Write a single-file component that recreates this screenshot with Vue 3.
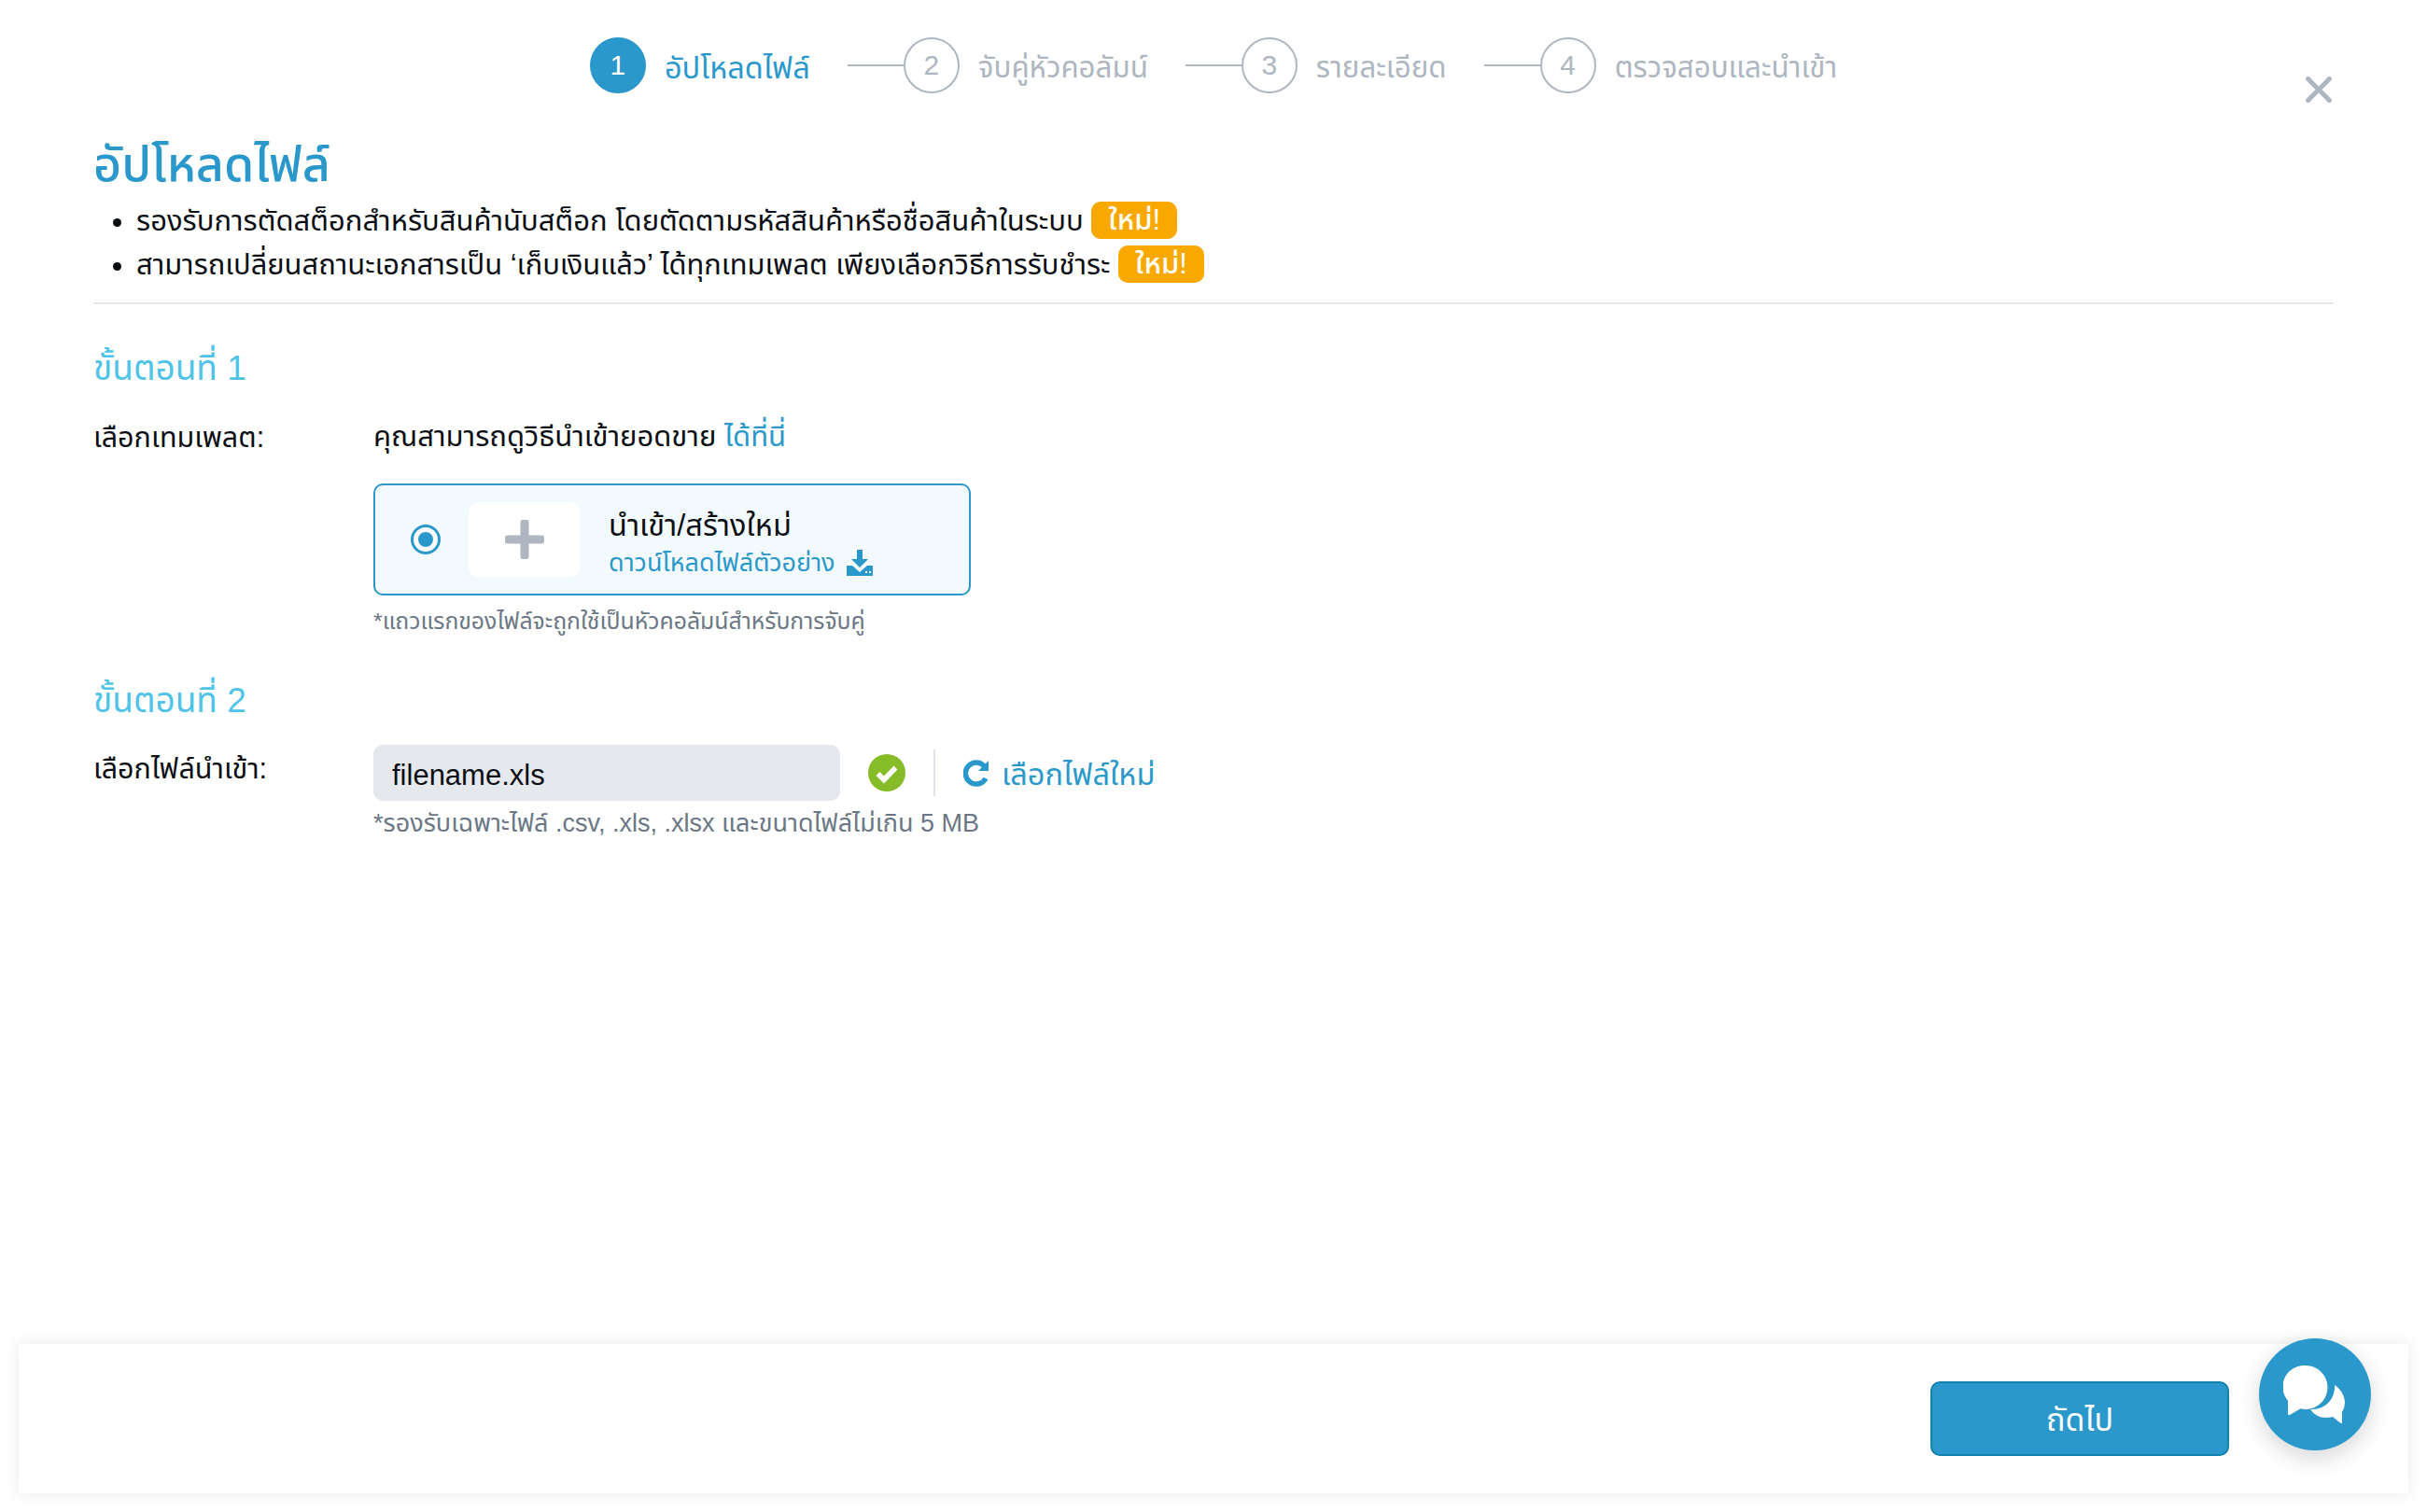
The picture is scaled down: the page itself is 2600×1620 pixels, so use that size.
<script setup>
const steps = [
  { n: 1, label: 'อัปโหลดไฟล์', active: true },
  { n: 2, label: 'จับคู่หัวคอลัมน์' },
  { n: 3, label: 'รายละเอียด' },
  { n: 4, label: 'ตรวจสอบและนำเข้า' }
]
</script>

<template>
  <div class="page">
    <nav class="stepper">
      <div v-for="s in steps" :key="s.n" class="step" :class="{ active: s.active }">
        <span v-if="s.n > 1" class="line"></span>
        <span class="num">{{ s.n }}</span>
        <span class="step-label">{{ s.label }}</span>
      </div>
    </nav>
    <svg class="close" width="28" height="28" viewBox="0 0 28 28"><path d="M2.500 2.500l23 23M25.500 2.500l-23 23" stroke="#aeb6c1" stroke-width="5" stroke-linecap="round" fill="none"/></svg>

    <main class="content">
      <h1>อัปโหลดไฟล์</h1>
      <ul class="notes">
        <li>รองรับการตัดสต็อกสำหรับสินค้านับสต็อก โดยตัดตามรหัสสินค้าหรือชื่อสินค้าในระบบ <span class="badge">ใหม่!</span></li>
        <li class="narrow">สามารถเปลี่ยนสถานะเอกสารเป็น ‘เก็บเงินแล้ว’ ได้ทุกเทมเพลต เพียงเลือกวิธีการรับชำระ <span class="badge">ใหม่!</span></li>
      </ul>

      <h2 class="first">ขั้นตอนที่ 1</h2>
      <div class="row">
        <div class="label">เลือกเทมเพลต:</div>
        <div class="field">
          <div class="intro">คุณสามารถดูวิธีนำเข้ายอดขาย <a>ได้ที่นี่</a></div>
          <div class="card">
            <span class="radio"><span></span></span>
            <span class="plus-box">
              <svg width="42" height="42" viewBox="0 0 42 42"><path d="M21 3v36M3 21h36" stroke="#aeb6c1" stroke-width="9" stroke-linecap="round"/></svg>
            </span>
            <div class="card-text">
              <div class="card-title">นำเข้า/สร้างใหม่</div>
              <a class="card-link">ดาวน์โหลดไฟล์ตัวอย่าง
                <svg width="28" height="28" viewBox="0 0 28 28"><path d="M11 0h6v10h6l-9 9-9-9h6z" fill="#2a98cb"/><path d="M0 17h6l8 7 8-7h6v11H0z" fill="#2a98cb"/><rect x="20" y="23" width="2" height="2" fill="#f3fafe"/><rect x="24" y="23" width="2" height="2" fill="#f3fafe"/></svg>
              </a>
            </div>
          </div>
          <div class="hint">*แถวแรกของไฟล์จะถูกใช้เป็นหัวคอลัมน์สำหรับการจับคู่</div>
        </div>
      </div>

      <h2 class="second">ขั้นตอนที่ 2</h2>
      <div class="row tight">
        <div class="label">เลือกไฟล์นำเข้า:</div>
        <div class="field">
          <div class="file-row">
            <div class="file">filename.xls</div>
            <svg class="check" width="40" height="40" viewBox="0 0 40 40"><circle cx="20" cy="20" r="20" fill="#85bc28"/><path d="M10.500 21l6.500 6.500 12.500-13" fill="none" stroke="#fff" stroke-width="5.500"/></svg>
            <span class="sep"></span>
            <a class="reselect">
              <svg width="28" height="30" viewBox="0 0 28 30"><path d="M24 21a11.500 11.500 0 1 1 -1.500-13" fill="none" stroke="#2a98cb" stroke-width="5.500"/><path d="M27 2v11H16z" fill="#2a98cb"/></svg>
              <span class="reselect-text">เลือกไฟล์ใหม่</span>
            </a>
          </div>
          <div class="hint size">*รองรับเฉพาะไฟล์ .csv, .xls, .xlsx และขนาดไฟล์ไม่เกิน 5 MB</div>
        </div>
      </div>
    </main>

    <footer class="footer">
      <button class="next">ถัดไป</button>
    </footer>

    <div class="chat">
      <svg width="68" height="62" viewBox="0 0 68 62">
        <path d="M24 0a22.500 22.500 0 0 1 0 47q-3 0-5.500-.7L7 53q-2 .6-2-1.500V38A23 23 0 0 1 24 0z" fill="#fff"/>
        <path d="M52 23c8 5 11 13 11 19q0 5-3 10v11q0 1.500-2 .5l-8-6.500q-4 1-7 1-11 0-17-9c15 1 27-10 26-26z" fill="#fff" transform="translate(3 -2)"/>
      </svg>
    </div>
  </div>
</template>

<style>
html, body { margin: 0; background: #fff; }
</style>

<style scoped>
.page {
  position: relative;
  width: 2600px;
  height: 1620px;
  overflow: hidden;
  display: flex;
  flex-direction: column;
  background: #fff;
  font-family: "Liberation Sans", "Noto Sans Thai", "Noto Sans", sans-serif;
  color: #0b0f14;
  font-size: 31px;
}
.stepper {
  display: flex;
  justify-content: center;
  align-items: center;
  height: 60px;
  padding-top: 40px;
}
.step { display: flex; align-items: center; }
.line { width: 60px; height: 2px; background: #aeb6c1; margin-left: 40px; }
.num {
  box-sizing: border-box;
  width: 60px;
  height: 60px;
  border-radius: 50%;
  border: 2px solid #aeb6c1;
  color: #aeb6c1;
  display: flex;
  align-items: center;
  justify-content: center;
  font-size: 30px;
}
.step-label { color: #aeb6c1; margin: 6px 0 0 20px; line-height: 40px; font-size: 31.300px; }
.active .num { background: #2a98cb; border-color: #2a98cb; color: #fff; }
.active .step-label { color: #2a98cb; font-size: 32.500px; }
.close { position: absolute; left: 2470px; top: 82px; }
.content { flex: 1; padding: 0 100px; }
h1 { margin: 42px 0 0; font-size: 52px; line-height: 68px; font-weight: 500; color: #2a98cb; }
.notes {
  margin: 0;
  padding: 3px 0 17px 46px;
  border-bottom: 2px solid #e5e9ee;
  line-height: 47px;
}
.narrow { font-size: 30.850px; }
.badge {
  display: inline-block;
  vertical-align: 1px;
  height: 40px;
  line-height: 40px;
  padding: 0 18px;
  border-radius: 10px;
  background: #f9a800;
  color: #fff;
  font-weight: 500;
  font-size: 31px;
}
h2 { margin: 0; font-size: 37px; line-height: 50px; font-weight: 400; color: #4fc3e8; }
h2.first { margin-top: 44px; }
h2.second { margin-top: 40px; }
.row { display: grid; grid-template-columns: 300px 1fr; margin-top: 24px; }
.row.tight { margin-top: 22px; }
.label { line-height: 46px; font-size: 30.500px; padding-top: 1px; }
.tight .label { padding-top: 2px; }
.intro { line-height: 46px; padding-top: 1px; margin-bottom: -1px; }
a { color: #2a98cb; }
.card {
  box-sizing: border-box;
  width: 640px;
  height: 120px;
  margin-top: 28px;
  display: flex;
  align-items: center;
  padding-left: 38px;
  border: 2px solid #2a98cb;
  border-radius: 10px;
  background: #f3fafe;
}
.radio {
  box-sizing: border-box;
  width: 32px;
  height: 32px;
  border: 3px solid #2a98cb;
  border-radius: 50%;
  background: #fff;
  display: flex;
  align-items: center;
  justify-content: center;
}
.radio span { width: 16px; height: 16px; border-radius: 50%; background: #2a98cb; }
.plus-box {
  width: 120px;
  height: 80px;
  margin-left: 30px;
  border-radius: 10px;
  background: #fff;
  display: flex;
  align-items: center;
  justify-content: center;
}
.card-text { margin-left: 30px; padding-top: 5px; }
.card-title { line-height: 44px; font-size: 32.500px; }
.card-link { display: flex; align-items: center; gap: 12px; font-size: 27px; line-height: 36px; }
.hint { margin-top: 8px; font-size: 24.800px; line-height: 40px; color: #6b7785; }
.file-row { display: flex; align-items: center; }
.file {
  box-sizing: border-box;
  width: 500px;
  height: 60px;
  padding: 0 20px;
  line-height: 66px;
  border-radius: 10px;
  background: #e5e8ed;
  color: #0b0f14;
}
.check { margin-left: 30px; }
.sep { width: 2px; height: 50px; margin: 0 30px; background: #dfe3e8; }
.reselect { display: flex; align-items: center; gap: 13px; font-size: 32.500px; }
.reselect-text { margin-top: 7px; }
.size { margin-top: 4px; font-size: 27px; }
.footer {
  box-sizing: border-box;
  height: 160px;
  margin: 0 20px 20px;
  padding-right: 192px;
  display: flex;
  align-items: center;
  justify-content: flex-end;
  background: #fff;
  box-shadow: 0 0 16px rgba(40, 50, 60, 0.1);
}
.next {
  box-sizing: border-box;
  width: 320px;
  height: 80px;
  border: 2px solid #1481ad;
  border-radius: 10px;
  background: #2a98cb;
  color: #fff;
  font: inherit;
  font-size: 34px;
  padding-top: 5px;
}
.chat {
  position: absolute;
  left: 2420px;
  top: 1434px;
  width: 120px;
  height: 120px;
  border-radius: 50%;
  background: #2a98cb;
  box-shadow: 0 8px 24px rgba(0, 0, 0, 0.16);
  display: flex;
  align-items: center;
  justify-content: center;
}
</style>
